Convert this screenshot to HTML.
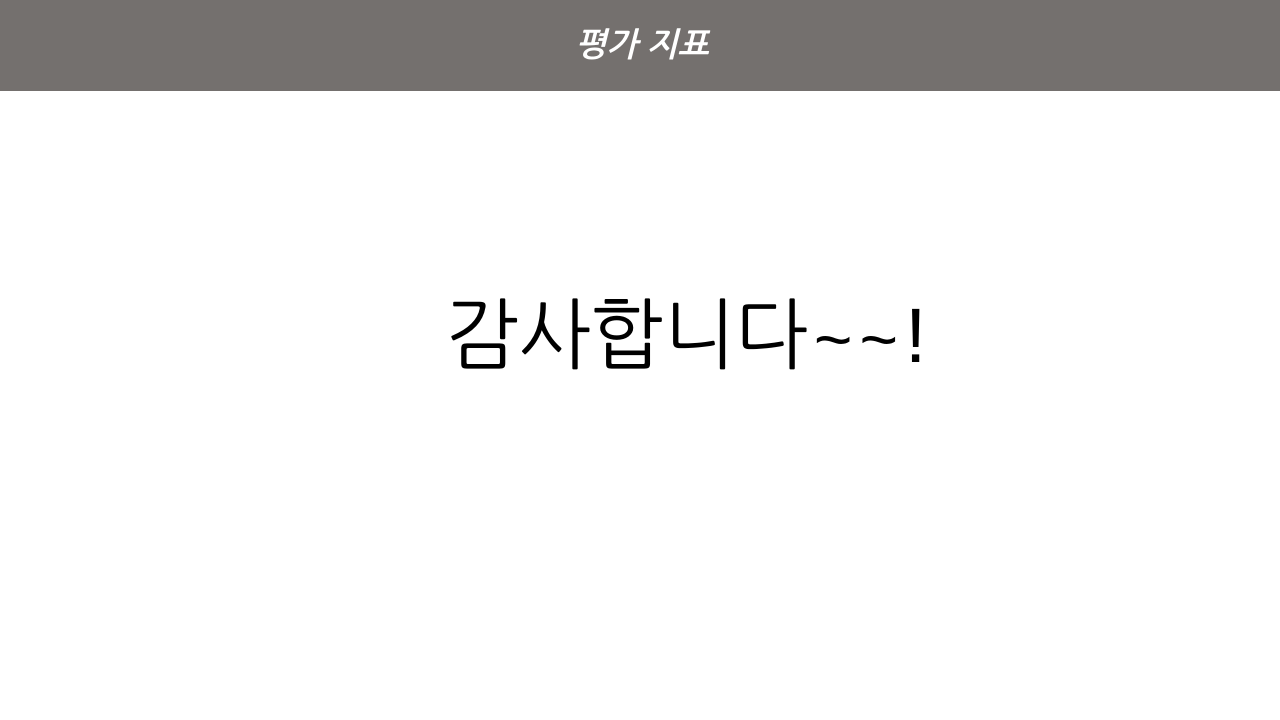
<!DOCTYPE html>
<html><head><meta charset="utf-8"><style>
body{margin:0;width:1280px;height:720px;background:#fff;overflow:hidden;position:relative;font-family:"Liberation Sans","NanumGothic","Noto Sans CJK KR",sans-serif}
.h{position:absolute;left:0;top:0;width:1280px;height:91px;background:#74706e}
.t{position:absolute;left:0;width:1284px;top:23px;text-align:center;color:#fff;font-weight:bold;font-style:italic;font-size:33px;line-height:44px}
.m{position:absolute;left:446px;top:281px;font-size:77px;line-height:110px;color:#000;white-space:nowrap}
.s{font-size:66px;letter-spacing:7px;margin-left:6px}
</style></head><body>
<div class="h"></div><div class="t">평가 지표</div>
<div class="m">감사합니다<span class="s">~~</span>!</div>
</body></html>
